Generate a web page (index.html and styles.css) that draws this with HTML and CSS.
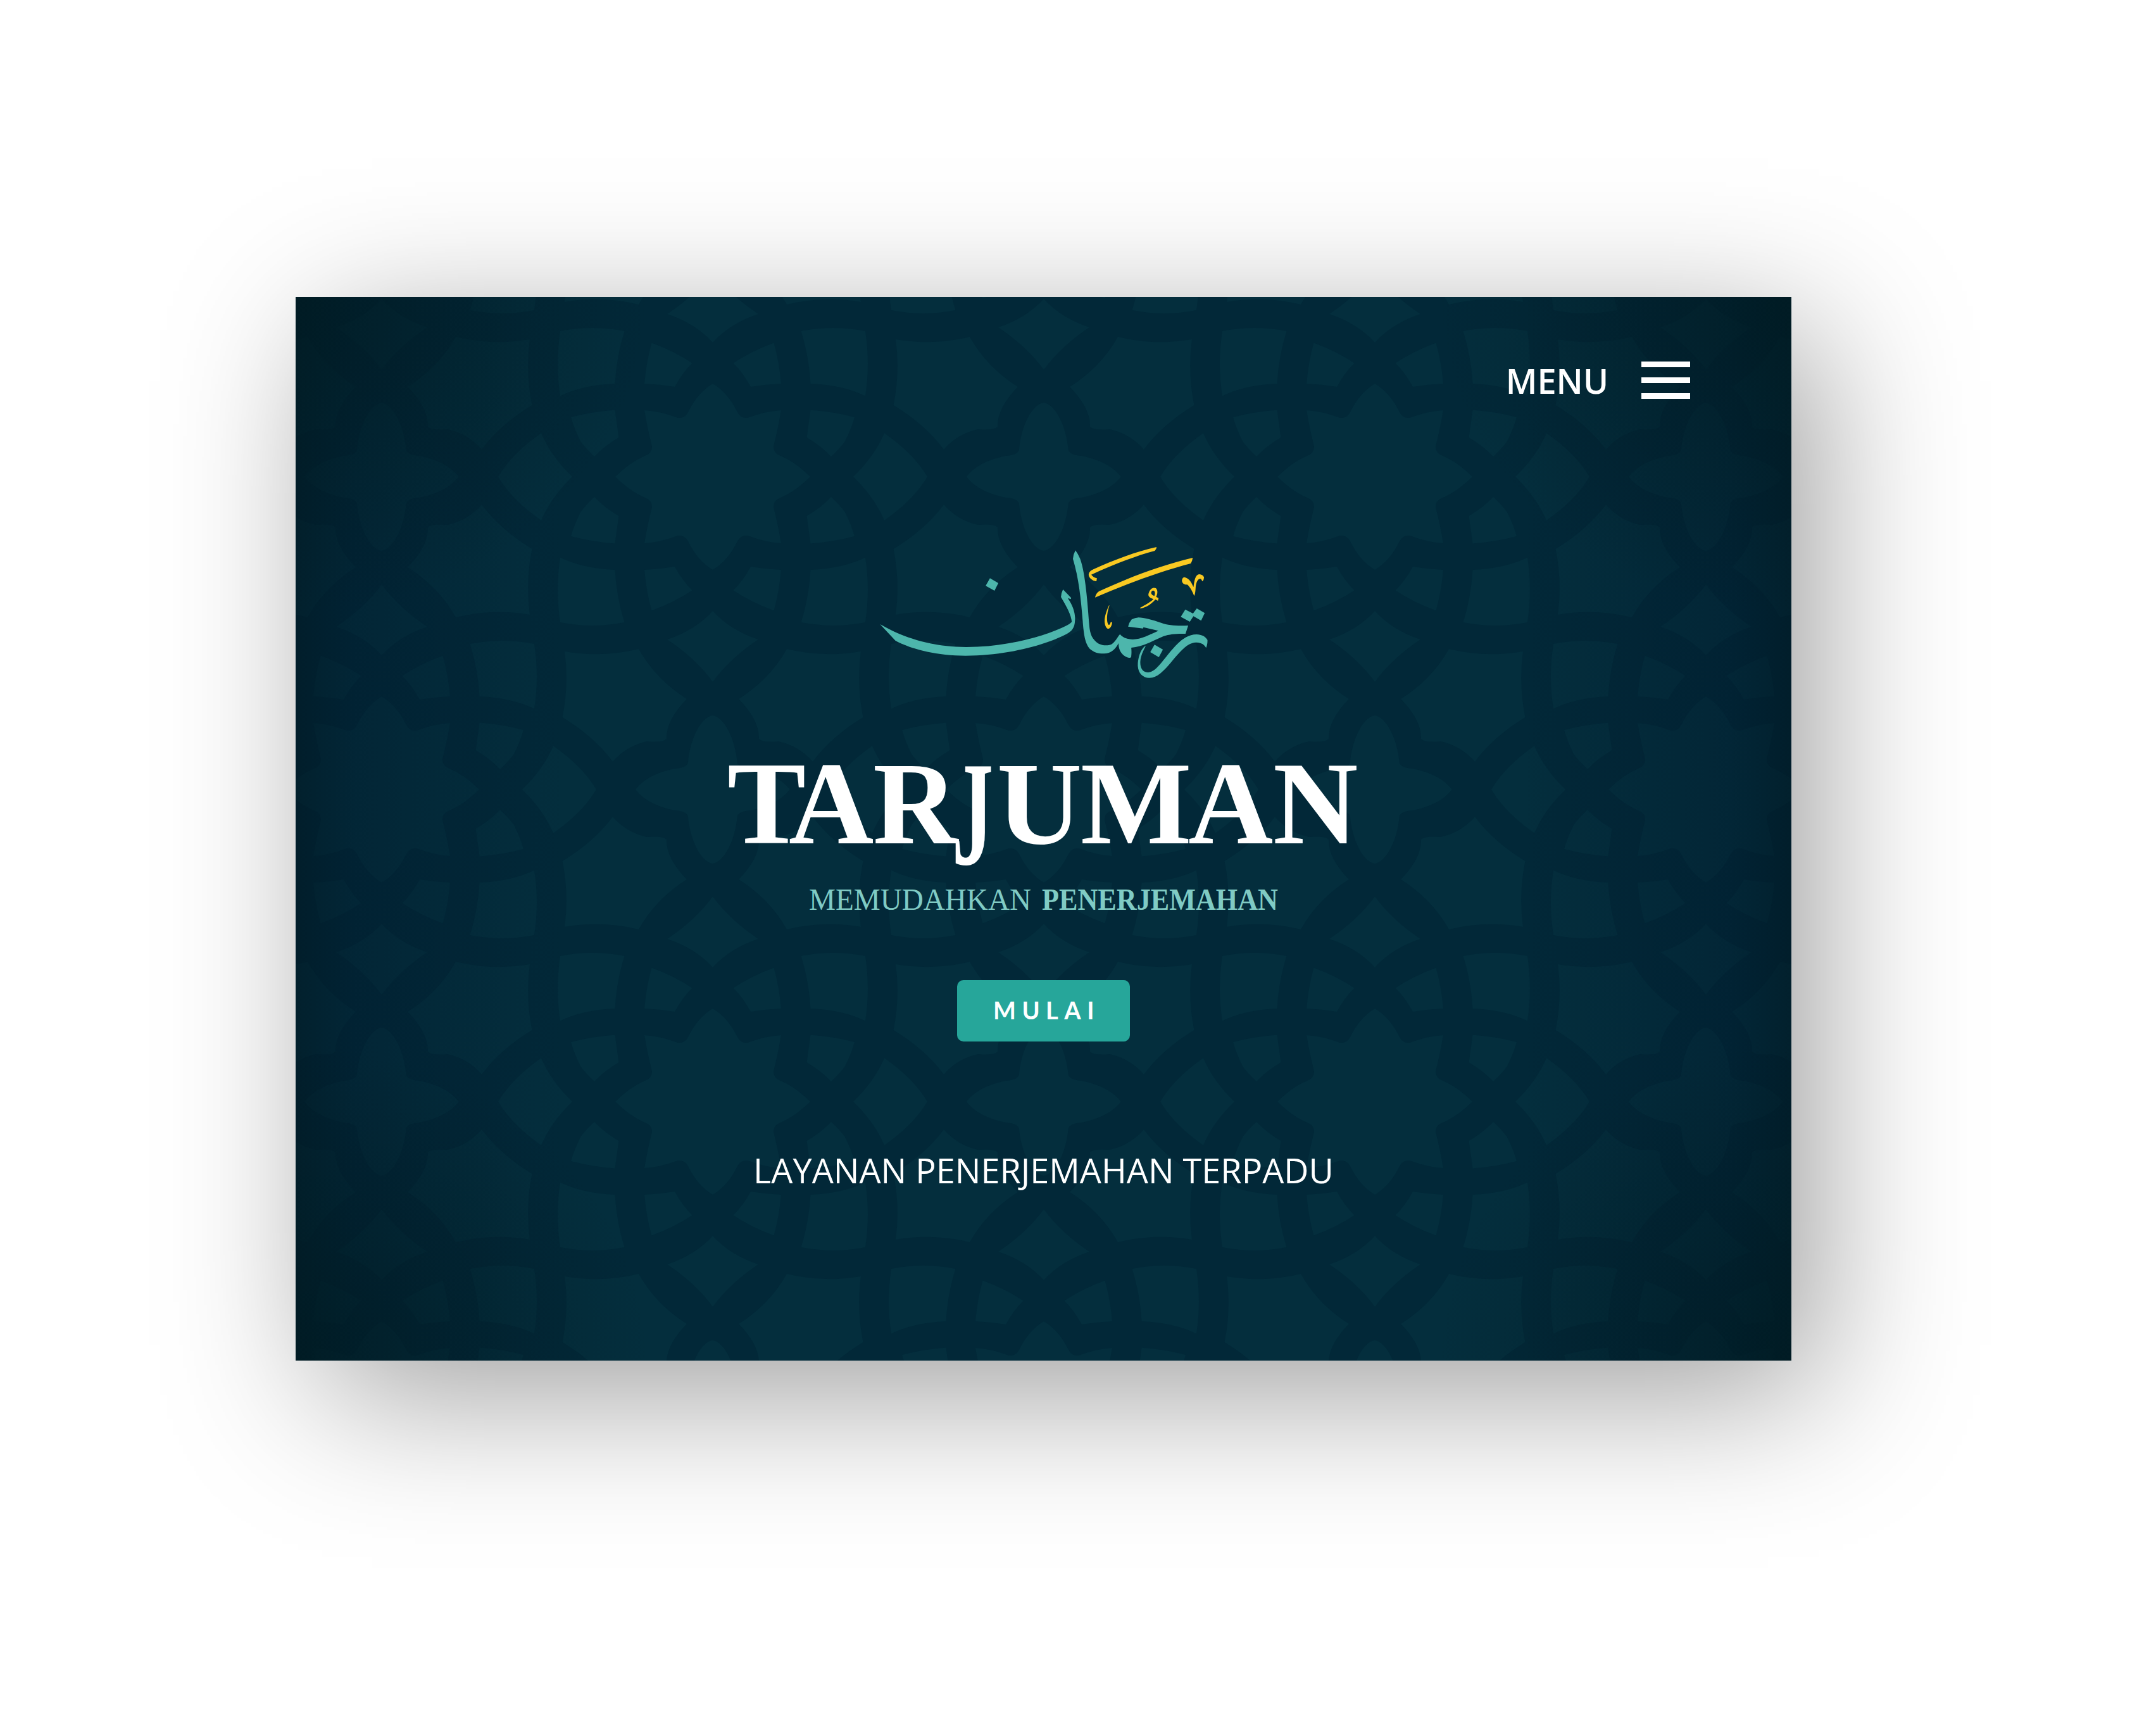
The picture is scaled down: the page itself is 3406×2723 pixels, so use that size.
FILE: index.html
```html
<!DOCTYPE html>
<html lang="id">
<head>
<meta charset="utf-8">
<title>Tarjuman</title>
<link rel="stylesheet" href="styles.css">
</head>
<body>
<main class="card">
  <svg class="pattern" viewBox="0 0 2363 1680" aria-hidden="true">
    <defs>
      <g id="quarter">
        <path d="M187,32 Q202,46 209,56 Q219,76 224,94 Q190,103 154.500,105.500 L148.500,62 Q172,48 187,32Z"/>
        <path d="M60,142 Q84,146 108,147 Q105,182 96.500,211.500 Q60,198 32.500,179.500 Q48,164 60,142Z"/>
        <path d="M154.500,147 Q205,145 241,127.500 Q249,178 241,230 Q190,240 139.500,230 Q152,190 154.500,147Z"/>
        <path d="M117,272 Q175,286 234,276 Q227,328 237.500,380 Q188,410 158,450 Q136,425 104,418 Q78,420 73,414 Q74,385 41,351 Q90,320 117,272Z"/>
      </g>
      <g id="motif">
        <path d="M154,0 Q130,-24 105,-34 Q96,-38 96,-48 Q103,-75 108,-105 Q85,-104 55,-93 Q44,-92 39,-102 Q24,-133 0,-147 Q-24,-133 -39,-102 Q-44,-92 -55,-93 Q-85,-104 -108,-105 Q-103,-75 -96,-48 Q-96,-38 -105,-34 Q-130,-24 -154,0 Q-130,24 -105,34 Q-96,38 -96,48 Q-103,75 -108,105 Q-85,104 -55,93 Q-44,92 -39,102 Q-24,133 0,147 Q24,133 39,102 Q44,92 55,93 Q85,104 108,105 Q103,75 96,48 Q96,38 105,34 Q130,24 154,0Z"/>
        <use href="#quarter"/>
        <use href="#quarter" transform="scale(-1,1)"/>
        <use href="#quarter" transform="scale(1,-1)"/>
        <use href="#quarter" transform="scale(-1,-1)"/>
        <path id="side" d="M222,0 Q256,-33 271,-69 Q318,-36 339,0 Q318,36 271,69 Q256,33 222,0Z"/>
        <use href="#side" transform="scale(-1,1)"/>
        <path id="tip" d="M0,212 Q27,242 72,257 Q27,287 0,324 Q-27,287 -72,257 Q-27,242 0,212Z"/>
        <use href="#tip" transform="scale(1,-1)"/>
        <path transform="translate(522.800,0)" d="M0,-117 C18,-115 36,-80 39,-42 Q42,-34 60,-33 Q104,-24 122,0 Q104,24 60,33 Q42,34 39,42 C36,80 18,115 0,117 C-18,115 -36,80 -39,42 Q-42,34 -60,33 Q-104,24 -122,0 Q-104,-24 -60,-33 Q-42,-34 -39,-42 C-36,-80 -18,-115 0,-117Z"/>
      </g>
      <radialGradient id="corner">
        <stop offset="0" stop-color="#001a20" stop-opacity=".65"/>
        <stop offset=".5" stop-color="#001a20" stop-opacity=".3"/>
        <stop offset="1" stop-color="#001a20" stop-opacity="0"/>
      </radialGradient>
      <linearGradient id="edges">
        <stop offset="0" stop-color="#001722" stop-opacity=".6"/>
        <stop offset=".04" stop-color="#001a2c" stop-opacity=".4"/>
        <stop offset=".18" stop-color="#001a2c" stop-opacity="0"/>
        <stop offset=".82" stop-color="#001a2c" stop-opacity="0"/>
        <stop offset=".96" stop-color="#001a2c" stop-opacity=".4"/>
        <stop offset="1" stop-color="#001722" stop-opacity=".6"/>
      </linearGradient>
    </defs>
    <rect width="2363" height="1680" fill="#022838"/>
    <g fill="#042e3d">
      <use href="#motif" x="136" y="-209"/>
      <use href="#motif" x="1182" y="-209"/>
      <use href="#motif" x="2228" y="-209"/>
      <use href="#motif" x="-387" y="284"/>
      <use href="#motif" x="659" y="284"/>
      <use href="#motif" x="1705" y="284"/>
      <use href="#motif" x="2751" y="284"/>
      <use href="#motif" x="136" y="778"/>
      <use href="#motif" x="-910" y="778"/>
      <use href="#motif" x="1182" y="778"/>
      <use href="#motif" x="2228" y="778"/>
      <use href="#motif" x="-387" y="1271"/>
      <use href="#motif" x="659" y="1271"/>
      <use href="#motif" x="1705" y="1271"/>
      <use href="#motif" x="2751" y="1271"/>
      <use href="#motif" x="136" y="1765"/>
      <use href="#motif" x="1182" y="1765"/>
      <use href="#motif" x="2228" y="1765"/>
    </g>
    <rect width="2363" height="1680" fill="url(#edges)"/>
    <g fill="url(#corner)">
      <ellipse cx="0" cy="0" rx="560" ry="500"/>
      <ellipse cx="2363" cy="0" rx="560" ry="500"/>
      <ellipse cx="0" cy="1680" rx="560" ry="500"/>
      <ellipse cx="2363" cy="1680" rx="560" ry="500"/>
    </g>
  </svg>

  <header class="topbar">
    <span class="menu-label">MENU</span>
    <span class="burger"><i></i><i></i><i></i></span>
  </header>

  <svg class="calligraphy" viewBox="0 0 1568 780" preserveAspectRatio="none" role="img" aria-label="ترجمان">
    <g fill="#4db6ac">
      <path d="M57,438 C110,470 240,546 440,546 C600,546 760,503 860,455 Q893,441 905,427 C903,395 880,350 857,309 Q858,290 866,273 L902,313 L901,319 L887,314 C908,345 922,385 919,420 C918,455 905,472 880,485 C800,530 630,587 435,587 C290,587 180,548 125,516Z"/>
      <path d="M921,88 Q911,108 910,128 C935,215 946,320 953,420 C958,490 964,530 985,555 C1003,572 1025,578 1048,577 C1080,576 1098,556 1112,527 C1110,562 1130,592 1158,597 Q1169,598 1168,588 Q1170,570 1168,549 C1220,545 1265,515 1310,495 C1340,484 1370,482 1408,483 L1420,444 C1370,446 1335,444 1300,431 C1260,417 1225,406 1200,406 Q1185,408 1170,415 Q1158,430 1154,449 L1220,458 L1222,452 L1288,469 C1250,488 1210,510 1175,510 C1150,510 1130,500 1118,485 C1105,500 1097,523 1080,533 C1062,541 1040,538 1024,530 C995,510 985,485 982,440 C975,340 965,195 942,128 Q932,103 921,88Z"/>
      <path d="M1230,540 C1207,560 1197,598 1197,635 C1199,670 1220,692 1248,692 C1285,691 1310,660 1345,617 C1390,560 1417,525 1455,524 C1480,525 1491,535 1499,550 Q1506,532 1505,512 C1495,495 1480,487 1457,486 C1405,487 1370,530 1330,582 C1290,635 1270,667 1238,666 C1215,664 1207,640 1208,615 C1210,585 1223,560 1231,543Z"/>
      <path d="M543,220 L580,243 L563,279 L524,256Z M1271,535 L1308,558 L1290,594 L1252,570Z M1407,368 L1441,387 L1458,363 L1493,385 L1477,421 L1443,400 L1427,426 L1387,403Z"/>
    </g>
    <g fill="#f9c922">
      <path d="M1280,72 Q1280,82 1272,90 C1190,113 1090,155 991,203 Q999,215 1016,220 L1014,234 Q1003,236 993,226 C978,215 977,202 983,191 Q988,183 1000,178 C1080,138 1180,96 1280,72Z"/>
      <path d="M1440,123 Q1438,138 1431,150 C1300,187 1150,245 1008,311 Q1012,291 1025,282 C1150,220 1300,158 1440,123Z"/>
      <path d="M1070,347 C1058,375 1050,400 1050,425 C1052,450 1060,460 1068,459 C1077,457 1084,440 1083,427 L1076,430 Q1075,441 1068,441 C1058,430 1058,390 1071,350Z"/>
      <path fill-rule="evenodd" d="M1207,360 C1228,348 1252,335 1266,319 C1246,311 1240,303 1246,288 C1252,268 1266,262 1277,267 C1287,277 1284,296 1278,308 L1289,314 L1286,327 L1275,320 C1255,345 1230,360 1208,363Z M1270,304 C1256,297 1253,290 1259,281 C1268,273 1278,285 1270,304Z"/>
      <path d="M1446,303 C1435,275 1425,257 1415,250 C1400,252 1392,240 1392,230 Q1394,215 1404,215 C1425,220 1436,242 1443,262 C1448,230 1450,205 1468,201 Q1486,202 1490,217 Q1489,228 1483,235 L1476,223 C1462,220 1456,238 1453,260 C1452,280 1450,300 1446,303Z"/>
    </g>
  </svg>

  <svg class="wordmark" viewBox="0 0 1060 300">
    <g class="title">
      <text x="29 126 259" y="162">TAR</text>
      <text transform="translate(384,195) scale(.7,1.26)">J</text>
      <text x="455 587 757 891" y="162">UMAN</text>
    </g>
    <text class="tagline" x="158" y="267" textLength="351" lengthAdjust="spacingAndGlyphs">MEMUDAHKAN</text>
    <text class="tagline strong" x="526" y="267" textLength="373" lengthAdjust="spacingAndGlyphs">PENERJEMAHAN</text>
  </svg>

  <button class="start">MULAI</button>

  <p class="caption">LAYANAN PENERJEMAHAN TERPADU</p>
</main>
</body>
</html>
```
FILE: styles.css
```css
* { box-sizing: border-box; }
body {
  margin: 0;
  padding: 469px 0 0 467px;
  width: 3406px;
  height: 2723px;
  overflow: hidden;
  background: #fff;
}
.card {
  position: relative;
  display: flex;
  flex-direction: column;
  align-items: center;
  width: 2363px;
  height: 1680px;
  background: #022838;
  box-shadow: 42px 54px 225px rgba(0, 0, 0, .38);
}
.card > * { position: relative; flex: none; }
.card > .pattern {
  position: absolute;
  inset: 0;
  width: 100%;
  height: 100%;
  overflow: hidden;
}
.topbar {
  display: flex;
  align-self: flex-end;
  align-items: center;
  gap: 52px;
  height: 161px;
  padding: 102px 160px 0 0;
}
.menu-label {
  font: 600 54px/60px "Open Sans", "Noto Sans", sans-serif;
  color: #fff;
}
.burger {
  display: flex;
  flex-direction: column;
  justify-content: space-between;
  width: 77px;
  height: 59px;
}
.burger i { height: 9px; background: #fff; }
.calligraphy {
  width: 560px;
  height: 260px;
  margin: 210px 0 0 3px;
}
.wordmark {
  width: 1060px;
  height: 300px;
  margin: 70px 0 0 3px;
  overflow: visible;
}
.title {
  font: 700 186px "Liberation Serif", serif;
  fill: #fff;
}
.tagline {
  font: 400 48px "Liberation Serif", serif;
  fill: #80cbc4;
}
.tagline.strong { font-weight: 700; }
.start {
  width: 273px;
  height: 97px;
  margin-top: 78px;
  padding: 0 0 2px 10px;
  border: 0;
  border-radius: 10px;
  background: #26a69a;
  color: #fff;
  font: 700 38px/95px Lato, sans-serif;
  letter-spacing: 9.5px;
}
.caption {
  margin: 163px 0 0;
  font: 400 54px/80px "Open Sans", "Noto Sans", sans-serif;
  color: #fff;
}
```
